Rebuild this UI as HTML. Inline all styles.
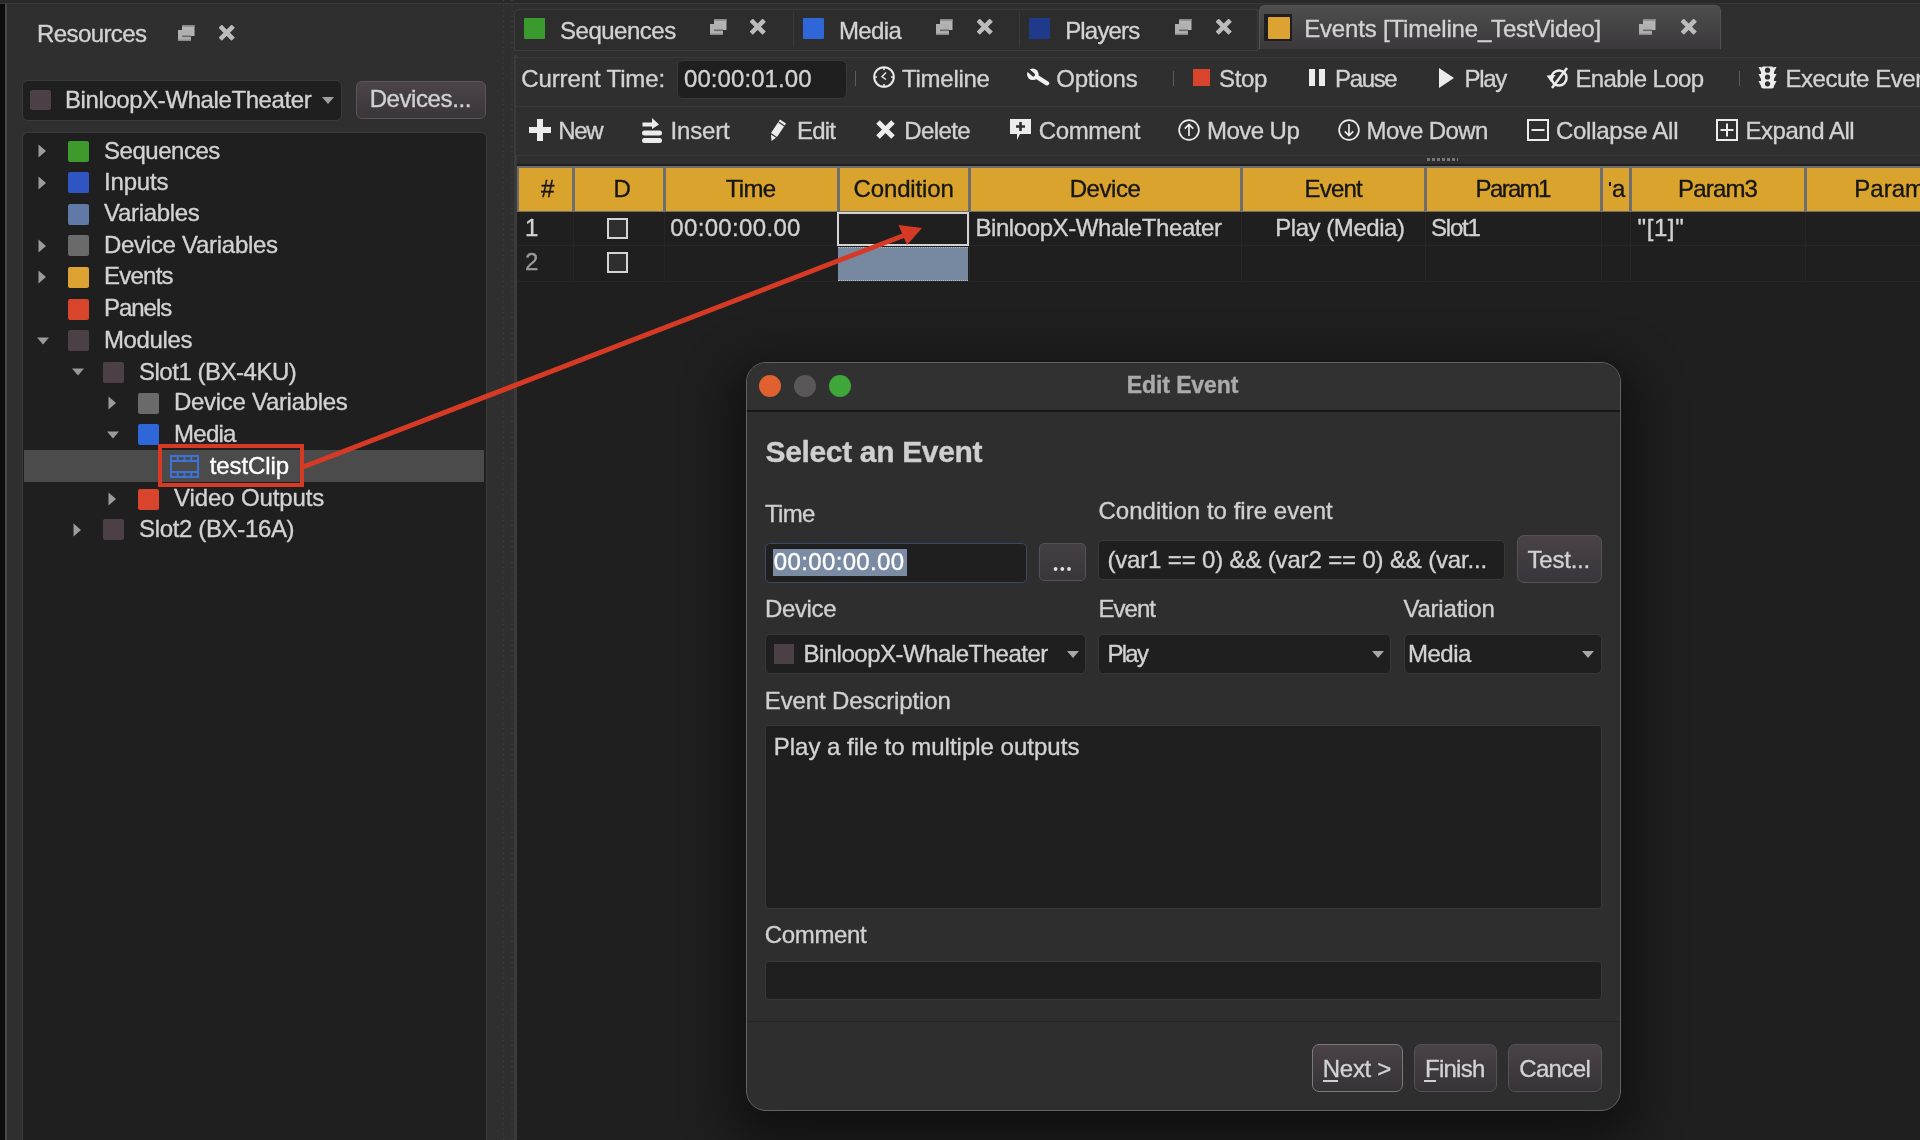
<!DOCTYPE html>
<html><head><meta charset="utf-8"><title>Edit Event</title>
<style>
html,body{margin:0;padding:0;width:1920px;height:1140px;overflow:hidden;background:#2f2f2f;}
body{position:relative;font-family:"Liberation Sans",sans-serif;color:#d2d2d2;}
.t{position:absolute;white-space:nowrap;-webkit-text-stroke:0.35px currentColor;}
.r{position:absolute;}
</style></head><body>
<div id="root" style="position:absolute;left:0;top:0;width:1920px;height:1140px;will-change:transform;">
<div class="r" style="left:0px;top:0px;width:1920px;height:1140px;background:#2f2f2f;"></div>
<div class="r" style="left:0px;top:0px;width:5px;height:1140px;background:#0c0c0c;"></div>
<div class="r" style="left:5px;top:0px;width:2px;height:1140px;background:#4a4848;"></div>
<div class="r" style="left:0px;top:0px;width:1920px;height:3px;background:#292929;"></div>
<div class="r" style="left:0px;top:3px;width:1920px;height:1px;background:#383838;"></div>
<div class="t" style="left:37.00px;top:21.7px;font-size:24px;line-height:24px;letter-spacing:-0.594px;">Resources</div>
<svg class="r" style="left:178px;top:25px" width="17" height="17" viewBox="0 0 17 17"><rect x="4" y="0" width="12.5" height="11" fill="#b4b4b4"/><rect x="4" y="0" width="12.5" height="1.8" fill="#8a8a8a"/><rect x="0" y="5" width="13" height="11" fill="#b0b0b0"/><rect x="4" y="10.5" width="9" height="1.6" fill="#6a6a6a"/><rect x="0" y="14.5" width="13" height="1.5" fill="#8a8a8a"/></svg>
<svg class="r" style="left:219px;top:24.5px" width="16" height="16" viewBox="0 0 16 16"><path d="M2.8 2.8 L12.6 12.6 M12.6 2.8 L2.8 12.6" stroke="#bcbcbc" stroke-width="4.6" stroke-linecap="square"/></svg>
<div class="r" style="left:21.5px;top:80px;width:320.5px;height:41px;background:#1f1f1f;border-radius:6px;border:1.5px solid #3a3a3a;box-sizing:border-box;"></div>
<div class="r" style="left:30px;top:90px;width:21px;height:20px;background:#4a4046;border-radius:2px;"></div>
<div class="t" style="left:65.00px;top:87.7px;font-size:24px;line-height:24px;letter-spacing:-0.408px;">BinloopX-WhaleTheater</div>
<svg class="r" style="left:322px;top:97px" width="12" height="8" viewBox="0 0 12 8"><path d="M0 0 L12 0 L6 7 Z" fill="#a0a0a0"/></svg>
<div class="r" style="left:356px;top:81px;width:130px;height:38px;background:linear-gradient(#4b4349,#3b3639);border-radius:6px;border:1px solid #5c555a;box-sizing:border-box;"></div>
<div class="t" style="left:369.70px;top:87.4px;font-size:24px;line-height:24px;letter-spacing:-0.417px;">Devices...</div>
<div class="r" style="left:22px;top:132px;width:465px;height:1008px;background:#1f1f1f;border-radius:6px 6px 0 0;border:1.5px solid #3a3a3a;border-bottom:none;box-sizing:border-box;"></div>
<div class="r" style="left:24px;top:450px;width:460px;height:32px;background:#4b4b4b;"></div>
<svg class="r" style="left:38px;top:144px" width="10" height="14" viewBox="0 0 10 14"><path d="M0.5 0.5 L8 7 L0.5 13.5 Z" fill="#9c9c9c"/></svg>
<div class="r" style="left:68px;top:141px;width:21px;height:21px;background:#3f9a2c;border-radius:2px;"></div>
<div class="t" style="left:104.00px;top:138.6px;font-size:24px;line-height:24px;letter-spacing:-0.475px;">Sequences</div>
<svg class="r" style="left:38px;top:176px" width="10" height="14" viewBox="0 0 10 14"><path d="M0.5 0.5 L8 7 L0.5 13.5 Z" fill="#9c9c9c"/></svg>
<div class="r" style="left:68px;top:172px;width:21px;height:21px;background:#2f55c2;border-radius:2px;"></div>
<div class="t" style="left:104.00px;top:170.0px;font-size:24px;line-height:24px;letter-spacing:-0.18px;">Inputs</div>
<div class="r" style="left:68px;top:204px;width:21px;height:21px;background:#6079a6;border-radius:2px;"></div>
<div class="t" style="left:104.00px;top:201.4px;font-size:24px;line-height:24px;letter-spacing:-0.306px;">Variables</div>
<svg class="r" style="left:38px;top:239px" width="10" height="14" viewBox="0 0 10 14"><path d="M0.5 0.5 L8 7 L0.5 13.5 Z" fill="#9c9c9c"/></svg>
<div class="r" style="left:68px;top:235px;width:21px;height:21px;background:#6a6a6a;border-radius:2px;"></div>
<div class="t" style="left:104.00px;top:232.9px;font-size:24px;line-height:24px;letter-spacing:-0.283px;">Device Variables</div>
<svg class="r" style="left:38px;top:270px" width="10" height="14" viewBox="0 0 10 14"><path d="M0.5 0.5 L8 7 L0.5 13.5 Z" fill="#9c9c9c"/></svg>
<div class="r" style="left:68px;top:267px;width:21px;height:21px;background:#dca332;border-radius:2px;"></div>
<div class="t" style="left:104.00px;top:264.3px;font-size:24px;line-height:24px;letter-spacing:-0.75px;">Events</div>
<div class="r" style="left:68px;top:299px;width:21px;height:21px;background:#d8442c;border-radius:2px;"></div>
<div class="t" style="left:104.00px;top:296.4px;font-size:24px;line-height:24px;letter-spacing:-1.04px;">Panels</div>
<svg class="r" style="left:36px;top:336px" width="14" height="10" viewBox="0 0 14 10"><path d="M1 1.5 L13 1.5 L7 8.5 Z" fill="#9a9a9a"/></svg>
<div class="r" style="left:68px;top:330px;width:21px;height:21px;background:#4a4046;border-radius:2px;"></div>
<div class="t" style="left:104.00px;top:327.9px;font-size:24px;line-height:24px;letter-spacing:-0.375px;">Modules</div>
<svg class="r" style="left:71px;top:367px" width="14" height="10" viewBox="0 0 14 10"><path d="M1 1.5 L13 1.5 L7 8.5 Z" fill="#9a9a9a"/></svg>
<div class="r" style="left:103px;top:362px;width:21px;height:21px;background:#4a4046;border-radius:2px;"></div>
<div class="t" style="left:139.00px;top:359.6px;font-size:24px;line-height:24px;letter-spacing:-0.485px;">Slot1 (BX-4KU)</div>
<svg class="r" style="left:108px;top:396px" width="10" height="14" viewBox="0 0 10 14"><path d="M0.5 0.5 L8 7 L0.5 13.5 Z" fill="#9c9c9c"/></svg>
<div class="r" style="left:138px;top:393px;width:21px;height:21px;background:#6a6a6a;border-radius:2px;"></div>
<div class="t" style="left:174.00px;top:390.2px;font-size:24px;line-height:24px;letter-spacing:-0.297px;">Device Variables</div>
<svg class="r" style="left:106px;top:430px" width="14" height="10" viewBox="0 0 14 10"><path d="M1 1.5 L13 1.5 L7 8.5 Z" fill="#9a9a9a"/></svg>
<div class="r" style="left:138px;top:424px;width:21px;height:21px;background:#2f66d8;border-radius:2px;"></div>
<div class="t" style="left:174.00px;top:422.2px;font-size:24px;line-height:24px;letter-spacing:-0.725px;">Media</div>
<svg class="r" style="left:170px;top:455px" width="29" height="23" viewBox="0 0 29 23"><rect x="1" y="1" width="27" height="21" fill="none" stroke="#3f72d8" stroke-width="2"/><path d="M1 6 H28 M1 17 H28" stroke="#3f72d8" stroke-width="2"/><path d="M7.75 1 V6 M14.5 1 V6 M21.25 1 V6 M7.75 17 V22 M14.5 17 V22 M21.25 17 V22" stroke="#3f72d8" stroke-width="2"/></svg>
<div class="t" style="left:209.70px;top:453.9px;font-size:24px;line-height:24px;color:#ffffff;letter-spacing:-0.086px;">testClip</div>
<svg class="r" style="left:108px;top:492px" width="10" height="14" viewBox="0 0 10 14"><path d="M0.5 0.5 L8 7 L0.5 13.5 Z" fill="#9c9c9c"/></svg>
<div class="r" style="left:138px;top:489px;width:21px;height:21px;background:#d8442c;border-radius:2px;"></div>
<div class="t" style="left:174.00px;top:486.3px;font-size:24px;line-height:24px;letter-spacing:-0.121px;">Video Outputs</div>
<svg class="r" style="left:73px;top:523px" width="10" height="14" viewBox="0 0 10 14"><path d="M0.5 0.5 L8 7 L0.5 13.5 Z" fill="#9c9c9c"/></svg>
<div class="r" style="left:103px;top:519px;width:21px;height:21px;background:#4a4046;border-radius:2px;"></div>
<div class="t" style="left:139.00px;top:516.7px;font-size:24px;line-height:24px;letter-spacing:-0.346px;">Slot2 (BX-16A)</div>
<svg class="r" style="left:502px;top:0" width="12" height="1140"><path d="M1.5 0 V1140" stroke="#3e3e3e" stroke-width="1.2" stroke-dasharray="1.2 4"/><path d="M10 0 V1140" stroke="#3e3e3e" stroke-width="1.6" stroke-dasharray="1.2 4"/></svg>
<div class="r" style="left:514px;top:55px;width:3px;height:1085px;background:#3b3b3b;"></div>
<div class="r" style="left:514px;top:9px;width:744px;height:42px;background:#2d2d2d;border:1px solid #3c3c3c;border-radius:5px 0 0 0;box-sizing:border-box;"></div>
<div class="r" style="left:793px;top:12px;width:1px;height:35px;background:#3a3a3a;"></div>
<div class="r" style="left:1019px;top:12px;width:1px;height:35px;background:#3a3a3a;"></div>
<div class="r" style="left:1259px;top:5px;width:462px;height:44px;background:linear-gradient(#4e4e4e,#3b383b);border-radius:6px 6px 0 0;border:1px solid #555;border-bottom:none;box-sizing:border-box;"></div>
<div class="r" style="left:524px;top:18px;width:21px;height:21px;background:#3a9a2e;border-radius:1px;"></div>
<div class="t" style="left:560.00px;top:19.4px;font-size:24px;line-height:24px;letter-spacing:-0.488px;">Sequences</div>
<svg class="r" style="left:710px;top:19px" width="17" height="17" viewBox="0 0 17 17"><rect x="4" y="0" width="12.5" height="11" fill="#b4b4b4"/><rect x="4" y="0" width="12.5" height="1.8" fill="#8a8a8a"/><rect x="0" y="5" width="13" height="11" fill="#b0b0b0"/><rect x="4" y="10.5" width="9" height="1.6" fill="#6a6a6a"/><rect x="0" y="14.5" width="13" height="1.5" fill="#8a8a8a"/></svg>
<svg class="r" style="left:750px;top:19px" width="16" height="16" viewBox="0 0 16 16"><path d="M2.8 2.8 L12.6 12.6 M12.6 2.8 L2.8 12.6" stroke="#bcbcbc" stroke-width="4.6" stroke-linecap="square"/></svg>
<div class="r" style="left:803px;top:18px;width:21px;height:21px;background:#2f66d8;border-radius:1px;"></div>
<div class="t" style="left:839.00px;top:19.4px;font-size:24px;line-height:24px;letter-spacing:-0.65px;">Media</div>
<svg class="r" style="left:936px;top:19px" width="17" height="17" viewBox="0 0 17 17"><rect x="4" y="0" width="12.5" height="11" fill="#b4b4b4"/><rect x="4" y="0" width="12.5" height="1.8" fill="#8a8a8a"/><rect x="0" y="5" width="13" height="11" fill="#b0b0b0"/><rect x="4" y="10.5" width="9" height="1.6" fill="#6a6a6a"/><rect x="0" y="14.5" width="13" height="1.5" fill="#8a8a8a"/></svg>
<svg class="r" style="left:976.5px;top:19px" width="16" height="16" viewBox="0 0 16 16"><path d="M2.8 2.8 L12.6 12.6 M12.6 2.8 L2.8 12.6" stroke="#bcbcbc" stroke-width="4.6" stroke-linecap="square"/></svg>
<div class="r" style="left:1029px;top:18px;width:21px;height:21px;background:#1f3a8a;border-radius:1px;"></div>
<div class="t" style="left:1065.20px;top:19.4px;font-size:24px;line-height:24px;letter-spacing:-0.833px;">Players</div>
<svg class="r" style="left:1175px;top:19px" width="17" height="17" viewBox="0 0 17 17"><rect x="4" y="0" width="12.5" height="11" fill="#b4b4b4"/><rect x="4" y="0" width="12.5" height="1.8" fill="#8a8a8a"/><rect x="0" y="5" width="13" height="11" fill="#b0b0b0"/><rect x="4" y="10.5" width="9" height="1.6" fill="#6a6a6a"/><rect x="0" y="14.5" width="13" height="1.5" fill="#8a8a8a"/></svg>
<svg class="r" style="left:1215.5px;top:19px" width="16" height="16" viewBox="0 0 16 16"><path d="M2.8 2.8 L12.6 12.6 M12.6 2.8 L2.8 12.6" stroke="#bcbcbc" stroke-width="4.6" stroke-linecap="square"/></svg>
<div class="r" style="left:1264px;top:14px;width:28px;height:27px;background:#1e1e1e;"></div>
<div class="r" style="left:1268px;top:17px;width:22px;height:22px;background:#dca332;border-radius:1px;"></div>
<div class="t" style="left:1304.20px;top:17.0px;font-size:24px;line-height:24px;letter-spacing:-0.173px;">Events [Timeline_TestVideo]</div>
<svg class="r" style="left:1639px;top:19px" width="17" height="17" viewBox="0 0 17 17"><rect x="4" y="0" width="12.5" height="11" fill="#b4b4b4"/><rect x="4" y="0" width="12.5" height="1.8" fill="#8a8a8a"/><rect x="0" y="5" width="13" height="11" fill="#b0b0b0"/><rect x="4" y="10.5" width="9" height="1.6" fill="#6a6a6a"/><rect x="0" y="14.5" width="13" height="1.5" fill="#8a8a8a"/></svg>
<svg class="r" style="left:1680.5px;top:19px" width="16" height="16" viewBox="0 0 16 16"><path d="M2.8 2.8 L12.6 12.6 M12.6 2.8 L2.8 12.6" stroke="#bcbcbc" stroke-width="4.6" stroke-linecap="square"/></svg>
<div class="r" style="left:516px;top:57px;width:1404px;height:48px;background:#2f2f2f;border-top:1px solid #3a3a3a;box-sizing:border-box;"></div>
<div class="t" style="left:521.30px;top:67.2px;font-size:24px;line-height:24px;letter-spacing:-0.129px;">Current Time:</div>
<div class="r" style="left:676.5px;top:59.5px;width:170.5px;height:39.0px;background:#1f1f1f;border-radius:6px;border:1px solid #383838;box-sizing:border-box;"></div>
<div class="t" style="left:684.00px;top:67.2px;font-size:24px;line-height:24px;letter-spacing:0.075px;">00:00:01.00</div>
<div class="r" style="left:855px;top:71px;width:1px;height:15px;background:#5c5c5c;"></div>
<div class="r" style="left:1173px;top:71px;width:1px;height:15px;background:#5c5c5c;"></div>
<div class="r" style="left:1739px;top:71px;width:1px;height:15px;background:#5c5c5c;"></div>
<svg class="r" style="left:871.5px;top:65.2px" width="24" height="24" viewBox="0 0 24 24"><circle cx="12" cy="12" r="9.8" fill="none" stroke="#ececec" stroke-width="2"/><path d="M12 2.5 V5 M12 19 V21.5 M2.5 12 H5 M19 12 H21.5" stroke="#ececec" stroke-width="1.6"/><path d="M14 7.5 L10 11.7 L14 14.5" fill="none" stroke="#ececec" stroke-width="1.4"/></svg>
<div class="t" style="left:902.00px;top:67.2px;font-size:24px;line-height:24px;letter-spacing:-0.264px;">Timeline</div>
<svg class="r" style="left:1024px;top:66px" width="26" height="22" viewBox="0 0 26 22"><circle cx="8.8" cy="8.3" r="5.8" fill="#f2f2f2"/><path d="M8.8 8.3 L23 17.3" stroke="#f2f2f2" stroke-width="4.4" stroke-linecap="round"/><path d="M9.3 8.8 L2.5 2.8" stroke="#2f2f2f" stroke-width="3.4" stroke-linecap="round"/></svg>
<div class="t" style="left:1056.20px;top:67.2px;font-size:24px;line-height:24px;letter-spacing:-0.192px;">Options</div>
<div class="r" style="left:1193px;top:69px;width:17px;height:17px;background:#d8442c;"></div>
<div class="t" style="left:1219.10px;top:67.2px;font-size:24px;line-height:24px;letter-spacing:-0.383px;">Stop</div>
<div class="r" style="left:1309px;top:69px;width:6px;height:17px;background:#ececec;"></div>
<div class="r" style="left:1319px;top:69px;width:6px;height:17px;background:#ececec;"></div>
<div class="t" style="left:1335.00px;top:67.2px;font-size:24px;line-height:24px;letter-spacing:-1.35px;">Pause</div>
<svg class="r" style="left:1439px;top:68px" width="16" height="20" viewBox="0 0 16 20"><path d="M0 0 L15 10 L0 20 Z" fill="#ececec"/></svg>
<div class="t" style="left:1464.50px;top:67.2px;font-size:24px;line-height:24px;letter-spacing:-1.35px;">Play</div>
<svg class="r" style="left:1546px;top:66px" width="24" height="24" viewBox="0 0 24 24"><circle cx="13" cy="12" r="7.5" fill="none" stroke="#ececec" stroke-width="2.5"/><path d="M6 22 L21 2" stroke="#ececec" stroke-width="2.5"/><path d="M0.5 9.5 L9.5 9 L5 16 Z" fill="#ececec"/></svg>
<div class="t" style="left:1575.40px;top:67.2px;font-size:24px;line-height:24px;letter-spacing:-0.615px;">Enable Loop</div>
<svg class="r" style="left:1758px;top:66px" width="19" height="23" viewBox="0 0 19 23"><rect x="3" y="0.5" width="13" height="22" rx="2.5" fill="#ececec"/><path d="M3 1 H0.5 L3 6 Z M3 8 H0.5 L3 13 Z M3 15 H0.5 L3 20 Z M16 1 H18.5 L16 6 Z M16 8 H18.5 L16 13 Z M16 15 H18.5 L16 20 Z" fill="#ececec"/><circle cx="9.5" cy="4.2" r="2.6" fill="#2f2f2f"/><circle cx="9.5" cy="11" r="2.6" fill="#2f2f2f"/><circle cx="9.5" cy="17.8" r="2.6" fill="#2f2f2f"/></svg>
<div class="t" style="left:1785.40px;top:67.2px;font-size:24px;line-height:24px;letter-spacing:-0.45px;">Execute Events</div>
<div class="r" style="left:516px;top:106px;width:1404px;height:50px;background:#2f2f2f;border-top:1px solid #383838;border-bottom:1px solid #383838;box-sizing:border-box;"></div>
<svg class="r" style="left:529px;top:119px" width="22" height="22" viewBox="0 0 22 22"><path d="M11 0 V22 M0 11 H22" stroke="#ececec" stroke-width="6"/></svg>
<div class="t" style="left:558.20px;top:118.9px;font-size:24px;line-height:24px;letter-spacing:-1.275px;">New</div>
<svg class="r" style="left:642px;top:117px" width="21" height="27" viewBox="0 0 21 27"><path d="M0.5 7.5 H11" stroke="#ececec" stroke-width="4"/><path d="M10 1 L17 7.5 L10 12 Z" fill="#ececec"/><path d="M2.5 16 H17.5 M2.5 23.5 H17.5" stroke="#ececec" stroke-width="5" stroke-linecap="round"/></svg>
<div class="t" style="left:670.50px;top:118.9px;font-size:24px;line-height:24px;letter-spacing:-0.18px;">Insert</div>
<svg class="r" style="left:770px;top:118px" width="17" height="24" viewBox="0 0 17 24"><path d="M10 1.5 L16 5.5 L7 19 L1 15 Z" fill="#ececec"/><path d="M1 16.5 L6 19.8 L1.5 23 Z" fill="#ececec"/><path d="M8.5 4 L14.5 8" stroke="#2f2f2f" stroke-width="1.2"/></svg>
<div class="t" style="left:796.90px;top:118.9px;font-size:24px;line-height:24px;letter-spacing:-0.75px;">Edit</div>
<svg class="r" style="left:875px;top:119px" width="21" height="21" viewBox="0 0 21 21"><path d="M3 3 L18 18 M18 3 L3 18" stroke="#ececec" stroke-width="5"/></svg>
<div class="t" style="left:904.20px;top:118.9px;font-size:24px;line-height:24px;letter-spacing:-0.58px;">Delete</div>
<svg class="r" style="left:1010px;top:119px" width="21" height="22" viewBox="0 0 21 22"><path d="M0 0 H21 V15 H10 L7 21 L7 15 H0 Z" fill="#ececec"/><path d="M10.5 3 V12 M6 7.5 H15" stroke="#2f2f2f" stroke-width="2.6"/></svg>
<div class="t" style="left:1038.80px;top:118.9px;font-size:24px;line-height:24px;letter-spacing:-0.4px;">Comment</div>
<svg class="r" style="left:1177.5px;top:119px" width="22" height="22" viewBox="0 0 22 22"><circle cx="11" cy="11" r="9.9" fill="none" stroke="#ececec" stroke-width="1.7"/><path d="M11 17 V5.5 M6.8 9.7 L11 5.5 L15.2 9.7" fill="none" stroke="#ececec" stroke-width="1.7"/></svg>
<div class="t" style="left:1207.10px;top:118.9px;font-size:24px;line-height:24px;letter-spacing:-0.567px;">Move Up</div>
<svg class="r" style="left:1338px;top:119px" width="22" height="22" viewBox="0 0 22 22"><circle cx="11" cy="11" r="9.9" fill="none" stroke="#ececec" stroke-width="1.7"/><path d="M11 5 V16.5 M6.8 12.3 L11 16.5 L15.2 12.3" fill="none" stroke="#ececec" stroke-width="1.7"/></svg>
<div class="t" style="left:1366.50px;top:118.9px;font-size:24px;line-height:24px;letter-spacing:-0.606px;">Move Down</div>
<svg class="r" style="left:1527px;top:119px" width="22" height="22" viewBox="0 0 22 22"><rect x="1" y="1" width="20" height="20" fill="none" stroke="#ececec" stroke-width="2"/><path d="M4.5 11 H17.5" stroke="#ececec" stroke-width="2"/></svg>
<div class="t" style="left:1555.90px;top:118.9px;font-size:24px;line-height:24px;letter-spacing:-0.255px;">Collapse All</div>
<svg class="r" style="left:1716px;top:119px" width="22" height="22" viewBox="0 0 22 22"><rect x="1" y="1" width="20" height="20" fill="none" stroke="#ececec" stroke-width="2"/><path d="M4.5 11 H17.5 M11 4.5 V17.5" stroke="#ececec" stroke-width="2"/></svg>
<div class="t" style="left:1745.40px;top:118.9px;font-size:24px;line-height:24px;letter-spacing:-0.456px;">Expand All</div>
<svg class="r" style="left:1427px;top:158px" width="31" height="3" viewBox="0 0 31 3"><path d="M0 1.5 H31" stroke="#777" stroke-width="3" stroke-dasharray="3 2"/></svg>
<div class="r" style="left:517px;top:164px;width:1403px;height:976px;background:#1f1f1f;"></div>
<div class="r" style="left:517px;top:166px;width:1403px;height:46px;background:#6e6e6e;"></div>
<div class="r" style="left:519px;top:168px;width:52.5px;height:43px;background:#d9a32e;"></div>
<div class="r" style="left:574.5px;top:168px;width:88.0px;height:43px;background:#d9a32e;"></div>
<div class="r" style="left:665.5px;top:168px;width:171.0px;height:43px;background:#d9a32e;"></div>
<div class="r" style="left:839.5px;top:168px;width:128.5px;height:43px;background:#d9a32e;"></div>
<div class="r" style="left:971px;top:168px;width:268.5px;height:43px;background:#d9a32e;"></div>
<div class="r" style="left:1243px;top:168px;width:181px;height:43px;background:#d9a32e;"></div>
<div class="r" style="left:1427px;top:168px;width:173px;height:43px;background:#d9a32e;"></div>
<div class="r" style="left:1603px;top:168px;width:26px;height:43px;background:#d9a32e;"></div>
<div class="r" style="left:1632px;top:168px;width:172px;height:43px;background:#d9a32e;"></div>
<div class="r" style="left:1807px;top:168px;width:113px;height:43px;background:#d9a32e;"></div>
<div class="t" style="left:541.00px;top:177.2px;font-size:24px;line-height:24px;color:#161616;-webkit-text-stroke:0.35px #161616;">#</div>
<div class="t" style="left:613.60px;top:177.2px;font-size:24px;line-height:24px;color:#161616;-webkit-text-stroke:0.35px #161616;">D</div>
<div class="t" style="left:725.75px;top:177.2px;font-size:24px;line-height:24px;color:#161616;letter-spacing:-0.667px;-webkit-text-stroke:0.35px #161616;">Time</div>
<div class="t" style="left:853.60px;top:177.2px;font-size:24px;line-height:24px;color:#161616;letter-spacing:-0.15px;-webkit-text-stroke:0.35px #161616;">Condition</div>
<div class="t" style="left:1069.65px;top:177.2px;font-size:24px;line-height:24px;color:#161616;letter-spacing:-0.41px;-webkit-text-stroke:0.35px #161616;">Device</div>
<div class="t" style="left:1304.55px;top:177.2px;font-size:24px;line-height:24px;color:#161616;letter-spacing:-0.838px;-webkit-text-stroke:0.35px #161616;">Event</div>
<div class="t" style="left:1475.60px;top:177.2px;font-size:24px;line-height:24px;color:#161616;letter-spacing:-1.64px;-webkit-text-stroke:0.35px #161616;">Param1</div>
<div class="t" style="left:1611.90px;top:177.2px;font-size:24px;line-height:24px;color:#161616;-webkit-text-stroke:0.35px #161616;letter-spacing:0;">a</div>
<div class="r" style="left:1609.3px;top:182px;width:2.0px;height:4px;background:#161616;"></div>
<div class="t" style="left:1678.10px;top:177.2px;font-size:24px;line-height:24px;color:#161616;letter-spacing:-0.84px;-webkit-text-stroke:0.35px #161616;">Param3</div>
<div class="t" style="left:1854.30px;top:177.2px;font-size:24px;line-height:24px;color:#161616;-webkit-text-stroke:0.35px #161616;">Param4</div>
<div class="r" style="left:572.5px;top:212px;width:1.0px;height:69px;background:#262626;"></div>
<div class="r" style="left:663.5px;top:212px;width:1.0px;height:69px;background:#262626;"></div>
<div class="r" style="left:837.5px;top:212px;width:1.0px;height:69px;background:#262626;"></div>
<div class="r" style="left:969px;top:212px;width:1px;height:69px;background:#262626;"></div>
<div class="r" style="left:1240.5px;top:212px;width:1.0px;height:69px;background:#262626;"></div>
<div class="r" style="left:1425px;top:212px;width:1px;height:69px;background:#262626;"></div>
<div class="r" style="left:1601px;top:212px;width:1px;height:69px;background:#262626;"></div>
<div class="r" style="left:1630px;top:212px;width:1px;height:69px;background:#262626;"></div>
<div class="r" style="left:1805px;top:212px;width:1px;height:69px;background:#262626;"></div>
<div class="r" style="left:517px;top:245px;width:1403px;height:1px;background:#262626;"></div>
<div class="r" style="left:517px;top:281px;width:1403px;height:1px;background:#262626;"></div>
<div class="r" style="left:838px;top:247px;width:130px;height:34px;background:#7789a0;border-top:1px dotted #b0b8c4;border-bottom:1px dotted #b0b8c4;box-sizing:border-box;"></div>
<div class="r" style="left:837px;top:212px;width:132px;height:34px;border:2px solid #d4d4d4;box-sizing:border-box;"></div>
<div class="r" style="left:607px;top:218px;width:21px;height:21px;background:#2f2f2f;border:2px solid #d4d4d4;box-sizing:border-box;"></div>
<div class="r" style="left:607px;top:252px;width:21px;height:21px;background:#2f2f2f;border:2px solid #d4d4d4;box-sizing:border-box;"></div>
<div class="t" style="left:525.00px;top:215.5px;font-size:24px;line-height:24px;">1</div>
<div class="t" style="left:525.00px;top:250.4px;font-size:24px;line-height:24px;color:#9a9a9a;">2</div>
<div class="t" style="left:670.30px;top:215.5px;font-size:24px;line-height:24px;letter-spacing:0.335px;">00:00:00.00</div>
<div class="t" style="left:975.40px;top:215.5px;font-size:24px;line-height:24px;letter-spacing:-0.408px;">BinloopX-WhaleTheater</div>
<div class="t" style="left:1275.20px;top:215.5px;font-size:24px;line-height:24px;letter-spacing:-0.45px;">Play (Media)</div>
<div class="t" style="left:1431.00px;top:215.5px;font-size:24px;line-height:24px;letter-spacing:-1.188px;">Slot1</div>
<div class="t" style="left:1637.50px;top:215.5px;font-size:24px;line-height:24px;letter-spacing:0.613px;">"[1]"</div>
<div class="r" style="left:746px;top:362px;width:875px;height:749px;border-radius:20px;background:#2e2e2e;border:1.5px solid #626262;box-sizing:border-box;box-shadow:0 18px 50px 16px rgba(0,0,0,0.47);overflow:hidden;"><div class="r" style="left:0;top:0;width:875px;height:47px;background:#313131;border-bottom:2px solid #151515;"></div><div class="r" style="left:0;top:658px;width:875px;height:1px;background:#262626;"></div></div>
<div class="r" style="left:758.5px;top:374.7px;width:22.0px;height:22.0px;background:#e0602f;border-radius:50%;"></div>
<div class="r" style="left:793.5px;top:374.7px;width:22.0px;height:22.0px;background:#5a5758;border-radius:50%;"></div>
<div class="r" style="left:828.5px;top:374.7px;width:22.0px;height:22.0px;background:#3fa63a;border-radius:50%;"></div>
<div class="t" style="left:1126.80px;top:374.1px;font-size:23px;line-height:23px;color:#ababab;font-weight:bold;letter-spacing:-0.1px;">Edit Event</div>
<div class="t" style="left:765.50px;top:436.6px;font-size:30px;line-height:30px;color:#cfcfcf;font-weight:bold;letter-spacing:-0.339px;">Select an Event</div>
<div class="t" style="left:764.90px;top:502.3px;font-size:24px;line-height:24px;color:#d0d0d0;letter-spacing:-0.633px;">Time</div>
<div class="t" style="left:1098.50px;top:499.4px;font-size:24px;line-height:24px;color:#d0d0d0;letter-spacing:0.032px;">Condition to fire event</div>
<div class="r" style="left:765px;top:543px;width:262px;height:40px;background:#1f1f1f;border-radius:5px;border:1px solid #3b4868;box-sizing:border-box;"></div>
<div class="r" style="left:773px;top:549px;width:134px;height:27px;background:#7a8ba3;"></div>
<div class="t" style="left:773.80px;top:550.2px;font-size:24px;line-height:24px;color:#ffffff;letter-spacing:0.355px;">00:00:00.00</div>
<div class="r" style="left:1039px;top:543px;width:47px;height:38px;background:linear-gradient(#453f43,#39353a);border-radius:5px;border:1px solid #57525a;box-sizing:border-box;"></div>
<svg class="r" style="left:1050px;top:565px" width="24" height="8"><circle cx="5.6" cy="4" r="1.9" fill="#e0e0e0"/><circle cx="12.3" cy="4" r="1.9" fill="#e0e0e0"/><circle cx="19" cy="4" r="1.9" fill="#e0e0e0"/></svg>
<div class="r" style="left:1098px;top:540px;width:407px;height:40px;background:#1f1f1f;border-radius:5px;border:1px solid #383838;box-sizing:border-box;"></div>
<div class="t" style="left:1107.40px;top:548.3px;font-size:24px;line-height:24px;letter-spacing:-0.158px;">(var1 == 0) &amp;&amp; (var2 == 0) &amp;&amp; (var...</div>
<div class="r" style="left:1517px;top:535px;width:85px;height:48px;background:linear-gradient(#4a4247,#39353a);border-radius:7px;border:1px solid #57525a;box-sizing:border-box;"></div>
<div class="t" style="left:1527.50px;top:548.3px;font-size:24px;line-height:24px;letter-spacing:-0.217px;">Test...</div>
<div class="t" style="left:764.90px;top:596.7px;font-size:24px;line-height:24px;color:#d0d0d0;letter-spacing:-0.33px;">Device</div>
<div class="t" style="left:1098.50px;top:596.7px;font-size:24px;line-height:24px;color:#d0d0d0;letter-spacing:-0.988px;">Event</div>
<div class="t" style="left:1403.40px;top:596.7px;font-size:24px;line-height:24px;color:#d0d0d0;letter-spacing:-0.2px;">Variation</div>
<div class="r" style="left:765px;top:634px;width:321px;height:40px;background:#1f1f1f;border-radius:5px;border:1px solid #383838;box-sizing:border-box;"></div>
<div class="r" style="left:774px;top:644px;width:20px;height:20px;background:#4a4046;"></div>
<div class="t" style="left:803.40px;top:642.4px;font-size:24px;line-height:24px;letter-spacing:-0.492px;">BinloopX-WhaleTheater</div>
<svg class="r" style="left:1067px;top:651px" width="12" height="8" viewBox="0 0 12 8"><path d="M0 0 L12 0 L6 7 Z" fill="#a8a8a8"/></svg>
<div class="r" style="left:1098px;top:634px;width:293px;height:40px;background:#1f1f1f;border-radius:5px;border:1px solid #383838;box-sizing:border-box;"></div>
<div class="t" style="left:1107.40px;top:642.4px;font-size:24px;line-height:24px;letter-spacing:-1.683px;">Play</div>
<svg class="r" style="left:1372px;top:651px" width="12" height="8" viewBox="0 0 12 8"><path d="M0 0 L12 0 L6 7 Z" fill="#a8a8a8"/></svg>
<div class="r" style="left:1404px;top:634px;width:198px;height:40px;background:#1f1f1f;border-radius:5px;border:1px solid #383838;box-sizing:border-box;"></div>
<div class="t" style="left:1408.00px;top:642.4px;font-size:24px;line-height:24px;letter-spacing:-0.5px;">Media</div>
<svg class="r" style="left:1582px;top:651px" width="12" height="8" viewBox="0 0 12 8"><path d="M0 0 L12 0 L6 7 Z" fill="#a8a8a8"/></svg>
<div class="t" style="left:764.80px;top:688.7px;font-size:24px;line-height:24px;color:#d0d0d0;letter-spacing:-0.131px;">Event Description</div>
<div class="r" style="left:765px;top:725px;width:837px;height:184px;background:#1f1f1f;border-radius:4px;border:1px solid #383838;box-sizing:border-box;"></div>
<div class="t" style="left:773.70px;top:735.0px;font-size:24px;line-height:24px;letter-spacing:0.007px;">Play a file to multiple outputs</div>
<div class="t" style="left:764.80px;top:923.0px;font-size:24px;line-height:24px;color:#d0d0d0;letter-spacing:-0.35px;">Comment</div>
<div class="r" style="left:765px;top:961px;width:837px;height:39px;background:#1f1f1f;border-radius:4px;border:1px solid #383838;box-sizing:border-box;"></div>
<div class="r" style="left:1312px;top:1044px;width:91px;height:48px;background:linear-gradient(#4a4247,#363336);border-radius:7px;border:1.5px solid #7a7a7a;box-sizing:border-box;"></div>
<div class="t" style="left:1322.80px;top:1057.1px;font-size:24px;line-height:24px;letter-spacing:-0.3px;">Next &gt;</div>
<div class="r" style="left:1323px;top:1080px;width:15px;height:2px;background:#d0d0d0;"></div>
<div class="r" style="left:1414px;top:1044px;width:83px;height:48px;background:linear-gradient(#4a4247,#363336);border-radius:7px;border:1px solid #55505a;box-sizing:border-box;"></div>
<div class="t" style="left:1425.00px;top:1057.1px;font-size:24px;line-height:24px;letter-spacing:-0.74px;">Finish</div>
<div class="r" style="left:1424px;top:1080px;width:12px;height:2px;background:#d0d0d0;"></div>
<div class="r" style="left:1508px;top:1044px;width:94px;height:48px;background:linear-gradient(#4a4247,#363336);border-radius:7px;border:1px solid #55505a;box-sizing:border-box;"></div>
<div class="t" style="left:1519.20px;top:1057.1px;font-size:24px;line-height:24px;letter-spacing:-0.63px;">Cancel</div>
<div class="r" style="left:158px;top:444px;width:146px;height:43px;border:4.5px solid #d63a25;box-sizing:border-box;"></div>
<svg class="r" style="left:0;top:0" width="1920" height="1140" viewBox="0 0 1920 1140"><path d="M303 467 L905 235" stroke="#d63a25" stroke-width="5"/><path d="M922 228 L898.5 225 L907 245 Z" fill="#d63a25"/></svg>
</div></body></html>
